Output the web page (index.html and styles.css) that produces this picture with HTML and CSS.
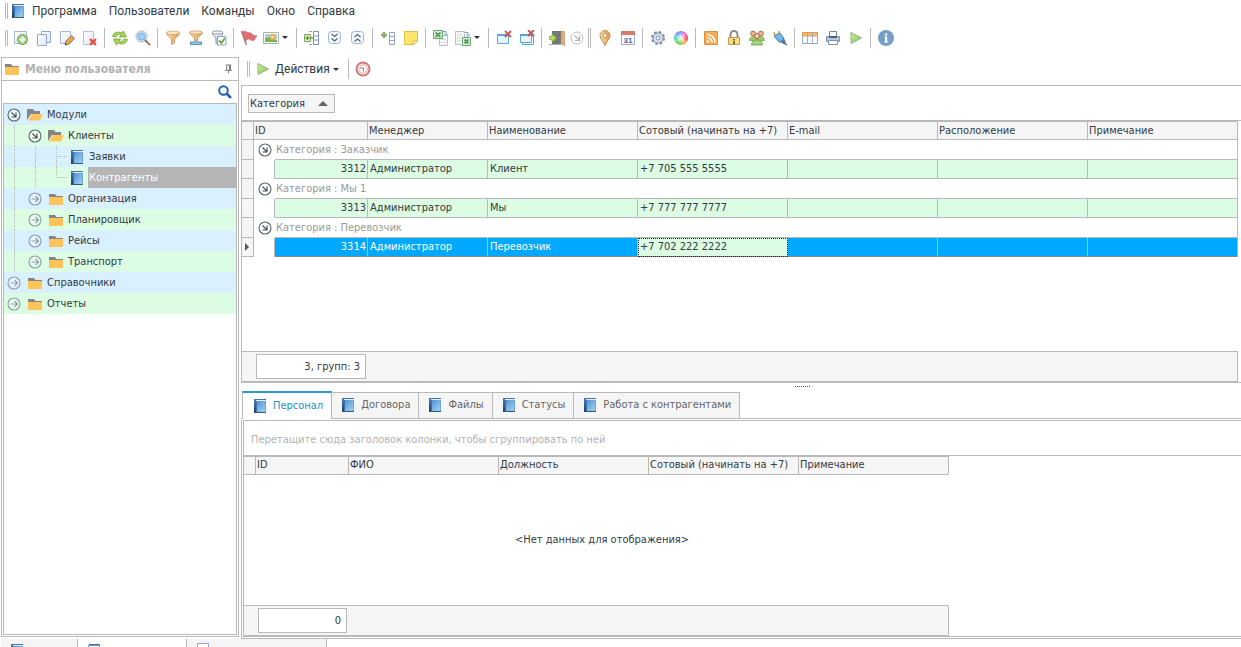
FILE: index.html
```html
<!DOCTYPE html>
<html lang="ru">
<head>
<meta charset="utf-8">
<title>Контрагенты</title>
<link rel="stylesheet" href="styles.css">
</head>
<body>
<svg class="sprite" aria-hidden="true">
  <defs>
    <linearGradient id="g-book" x1="0" y1="0" x2="1" y2="1"><stop offset="0" stop-color="#4f90d0"/><stop offset="1" stop-color="#a2d4f5"/></linearGradient>
    <linearGradient id="g-spine" x1="0" y1="0" x2="0" y2="1"><stop offset="0" stop-color="#4b7fba"/><stop offset="1" stop-color="#223a5c"/></linearGradient>
    <linearGradient id="g-gold" x1="0" y1="0" x2="1" y2="0"><stop offset="0" stop-color="#fbe0ad"/><stop offset="1" stop-color="#e39a4c"/></linearGradient>
    <linearGradient id="g-green" x1="0" y1="0" x2="1" y2="1"><stop offset="0" stop-color="#d3efb0"/><stop offset="1" stop-color="#7dbf4f"/></linearGradient>
    <linearGradient id="g-page" x1="0" y1="0" x2="1" y2="1"><stop offset="0" stop-color="#ffffff"/><stop offset="1" stop-color="#dfe7f5"/></linearGradient>
    <radialGradient id="g-shine"><stop offset="0" stop-color="#fff"/><stop offset="1" stop-color="#fff" stop-opacity="0"/></radialGradient>
  </defs>
  <symbol id="book" viewBox="0 0 16 16"><path d="M2 1h12v1H2z" fill="#4674a8"/><path d="M4 2h10v1H4z" fill="#e3eef8"/><path d="M4 3h10v11H4z" fill="url(#g-book)"/><path d="M13 3h1v11h-1z" fill="#6fa3d3"/><path d="M2 1h2v14H2z" fill="url(#g-spine)"/><path d="M4 3h1v11H4z" fill="#3871b0"/><path d="M3 14h11v1H3z" fill="#34597f"/></symbol>
  <symbol id="folder" viewBox="0 0 16 16"><path d="M1 3h6l1.500 2H15v2H1z" fill="#858585"/><path d="M1 6h14v8H1z" fill="#ffc35c"/></symbol>
  <symbol id="folder-open" viewBox="0 0 16 16"><path d="M0 2h6l1.500 2H13v3H4L0 13z" fill="#858585"/><path d="M5 7h11l-3 6.500H1z" fill="#ffc35c"/></symbol>
  <symbol id="opened" viewBox="0 0 14 14"><circle cx="7" cy="7" r="6" fill="#fff" fill-opacity=".5" stroke="#5b656e" stroke-width="1.100"/><path d="M4.500 4.500l4 4M9 4.500V9H4.500" fill="none" stroke="#4a535b" stroke-width="1.200"/></symbol>
  <symbol id="closed" viewBox="0 0 14 14"><circle cx="7" cy="7" r="6" fill="#fff" fill-opacity=".3" stroke="#8f9da5" stroke-width="1.100"/><path d="M3.500 7h6.500M7.500 4l3 3-3 3" fill="none" stroke="#8f9da5" stroke-width="1.100"/></symbol>
  <symbol id="add" viewBox="0 0 16 16"><path d="M1.500 1.500h12v12h-12z" fill="url(#g-page)" stroke="#a9b7db"/><circle cx="9.500" cy="9.500" r="5" fill="#9ccf7d" stroke="#6fa651"/><path d="M9.500 6.500v6M6.500 9.500h6" stroke="#fff" stroke-width="2"/></symbol>
  <symbol id="copy" viewBox="0 0 16 16"><path d="M5.500 1.500h9v11h-9z" fill="url(#g-page)" stroke="#94a7d2"/><path d="M1.500 4.500h9v11h-9z" fill="url(#g-page)" stroke="#94a7d2"/></symbol>
  <symbol id="edit" viewBox="0 0 16 16"><path d="M1.500 1.500h10v12h-10z" fill="url(#g-page)" stroke="#a9b7db"/><path d="M6 15l1-4 5.500-5.500 3 3L10 14z" fill="#e4a855" stroke="#9c7546"/><path d="M6 15l.5-2 1.500 1.500z" fill="#463c38"/></symbol>
  <symbol id="remove" viewBox="0 0 16 16"><path d="M1.500 1.500h10v13h-10z" fill="url(#g-page)" stroke="#b5c1df"/><path d="M8 9h6v6H8z" fill="#f2b5ad"/><path d="M8 9l6 6M14 9l-6 6" stroke="#d9534b" stroke-width="2"/></symbol>
  <symbol id="refresh" viewBox="0 0 16 16"><path d="M.5 6.500C1.500 2.500 6 1 10 3l1.500-2 3 6H7.500l1.500-2C6.500 4 4.500 5 4 7zM15.500 9.500C14.500 13.500 10 15 6 13l-1.500 2-3-6h7L7 11c2.500 1 4.500 0 5-2z" fill="#a6d455" stroke="#6ca33c" stroke-width=".8"/></symbol>
  <symbol id="find" viewBox="0 0 16 16"><circle cx="6.500" cy="6.500" r="5.500" fill="#eaf4fd" stroke="#a5b4c5"/><circle cx="6.500" cy="6.500" r="3.800" fill="#a3cdf0" stroke="#7ca9d5"/><path d="M10.500 10.500l4 4" stroke="#b98258" stroke-width="2.200" stroke-linecap="round"/><path d="M10.500 10.500l1.500 1.500" stroke="#657fae" stroke-width="2"/></symbol>
  <symbol id="funnel" viewBox="0 0 16 16"><path d="M1.500 3c0 2.500 4.500 5 5 6v5.500L9.500 13V9c.5-1 5-3.500 5-6z" fill="url(#g-gold)" stroke="#c98e57" stroke-width=".8"/><ellipse cx="8" cy="2.800" rx="6.500" ry="1.800" fill="#fbe6bd" stroke="#d09a63" stroke-width=".8"/></symbol>
  <symbol id="funnel-edit" viewBox="0 0 16 16"><path d="M1.500 2.500c0 2 4.500 4.500 5 5.500v3h3V8c.5-1 5-3.500 5-5.500z" fill="url(#g-gold)" stroke="#c98e57" stroke-width=".8"/><ellipse cx="8" cy="2.500" rx="6.500" ry="1.600" fill="#fbe6bd" stroke="#d09a63" stroke-width=".8"/><path d="M2.500 12h11v2.500h-11z" fill="#8fd0e9" stroke="#538fba"/></symbol>
  <symbol id="funnel-check" viewBox="0 0 16 16"><path d="M1 3c0 2 4 4 4 5v5.500l3-1V8c1-1 4-3 4-5z" fill="#e3e9f2" stroke="#8796ae"/><ellipse cx="6.500" cy="2.500" rx="5.500" ry="1.600" fill="#fff" stroke="#8796ae"/><path d="M6.500 6.500h8.500v8.500H6.500z" fill="#fff" stroke="#8ba2cc"/><path d="M8 10.500l2.500 2.500L14 8" fill="none" stroke="#64ac43" stroke-width="1.800"/></symbol>
  <symbol id="flag" viewBox="0 0 16 16"><path d="M.5 1l5 14" stroke="#9a8b8b" stroke-width="1.500"/><path d="M1 2c2-2 4 0 6 .500s3 0 4 1.500 2.500 1.500 5 2c-2 1-1.500 4-4 4.500-2 .5-2-1.500-4-1.500s-2.500 1-4 2.500z" fill="#df6f74" stroke="#b9555a" stroke-width=".6"/></symbol>
  <symbol id="image" viewBox="0 0 16 16"><path d="M.5 2.500h15v11H.5z" fill="#fff" stroke="#a9b5a0"/><path d="M2 4h12v5H2z" fill="#a3d3eb"/><path d="M2 8l4-1 8 3v2H2z" fill="#75b458"/><circle cx="9.500" cy="7" r="3" fill="#f0a957"/><circle cx="9.500" cy="7" r="1.300" fill="#fff0b6"/></symbol>
  <symbol id="expand-col" viewBox="0 0 16 16"><path d="M9.500 1.500h5v13h-5zM9.500 6h5M9.500 10h5" fill="#fff" stroke="#7c92bb"/><path d="M5 1.500h3M5 14.500h3" stroke="#9aa8ae"/><path d="M.5 4.500h6v7h-6z" fill="#dff0cd" stroke="#79a65a"/><path d="M3.500 6v4M1.500 8h4M6 8h3" stroke="#5f9641" stroke-width="1.400"/></symbol>
  <symbol id="down2" viewBox="0 0 16 16"><rect x="1.500" y="1.500" width="12" height="12" rx="3" fill="#f6fafe" stroke="#9bb6d6"/><path d="M4.500 4l3 2.500 3-2.500M4.500 8.500l3 2.500 3-2.500" fill="none" stroke="#536783" stroke-width="1.300"/></symbol>
  <symbol id="up2" viewBox="0 0 16 16"><rect x="1.500" y="1.500" width="12" height="12" rx="3" fill="#f6fafe" stroke="#9bb6d6"/><path d="M4.500 7l3-2.500 3 2.500M4.500 11.500l3-2.500 3 2.500" fill="none" stroke="#536783" stroke-width="1.300"/></symbol>
  <symbol id="add-row" viewBox="0 0 16 16"><path d="M9.500 2.500h5v12h-5zM9.500 6.500h5M9.500 10.500h5" fill="#fff" stroke="#8da0c5"/><path d="M4 2v6M1 5h6" stroke="#87af68" stroke-width="2.500"/></symbol>
  <symbol id="note" viewBox="0 0 16 16"><path d="M1.500 1.500h13v9l-4 4h-9z" fill="#fce66b" stroke="#ddc044"/><path d="M10 15v-4h5z" fill="#fff4a5" stroke="#c6a037" stroke-width=".6"/></symbol>
  <symbol id="xls-out" viewBox="0 0 16 16"><path d="M6.500 5.500h8v10h-8z" fill="#f4f4f4" stroke="#bcbfc4"/><path d="M8 9.500h5M8 12.500h5" stroke="#d5d7da"/><path d="M.5.5h9v8h-9z" fill="#dcefd8" stroke="#6aa871"/><path d="M2.500 2.500l5 4.500M7.500 2.500l-5 4.500" stroke="#559c5d" stroke-width="1.800"/><path d="M10 1.500h3v3.500M11 3.500l2 2 2-2" fill="none" stroke="#6ca5c9"/></symbol>
  <symbol id="xls-in" viewBox="0 0 16 16"><path d="M.5 1.500h9v13h-9z" fill="#f4f4f4" stroke="#bcbfc4"/><path d="M2 5h5M2 8h4M2 11h4" stroke="#d5d7da"/><path d="M7.500 7.500h8v8h-8z" fill="#dcefd8" stroke="#6aa871"/><path d="M9.500 9.500l4 4M13.500 9.500l-4 4" stroke="#559c5d" stroke-width="1.800"/><path d="M10 2.500h3v3.500M11 4.500l2 2 2-2" fill="none" stroke="#6ca5c9"/></symbol>
  <symbol id="close-win" viewBox="0 0 16 16"><path d="M1.500 4.500h11v9h-11z" fill="#e6f4fd" stroke="#5da2d9"/><path d="M1 5h12" stroke="#5da2d9" stroke-width="2"/><path d="M9 1l6 6M15 1L9 7" stroke="#c4564c" stroke-width="1.800"/></symbol>
  <symbol id="close-all" viewBox="0 0 16 16"><path d="M3.500 6.500h11v8h-11z" fill="#fff" stroke="#5da2d9"/><path d="M1.500 4.500h11v8h-11z" fill="#e6f4fd" stroke="#5da2d9"/><path d="M1 5h12" stroke="#5da2d9" stroke-width="2"/><path d="M9 0l6 6M15 0L9 6" stroke="#c4564c" stroke-width="1.800"/></symbol>
  <symbol id="window" viewBox="0 0 16 16"><path d="M2.500 2.500h11v11h-11z" fill="#fff" stroke="#5d93c9"/><path d="M3 1.500h11" stroke="#4674a8"/></symbol>
  <symbol id="sheet" viewBox="0 0 16 16"><path d="M2.500.5h11v14h-11z" fill="#fff" stroke="#94a7d2"/></symbol>
  <symbol id="exit" viewBox="0 0 16 16"><path d="M3 1h10v13H3z" fill="#77777a"/><path d="M12 2.500L15.500 1v14.500L12 14z" fill="#dcae78" stroke="#b98e61" stroke-width=".6"/><path d="M0 14.500h12" stroke="#a9a9a9"/><path d="M0 6.500h3V4l4.500 4L3 12V9.500H0z" fill="#b5e34f" stroke="#73a433" stroke-width=".7"/></symbol>
  <symbol id="dim" viewBox="0 0 16 16"><circle cx="8" cy="8" r="6" fill="none" stroke="#bcbcbc"/><path d="M5.500 5.500l4.500 4.500M10.500 6v4.500H6" fill="none" stroke="#b3b3b3" stroke-width="1.200"/></symbol>
  <symbol id="pin" viewBox="0 0 16 16"><path d="M8 15.500C7 12 3 9 3 5.500a5 5 0 0 1 10 0C13 9 9 12 8 15.500z" fill="url(#g-gold)" stroke="#c19151"/><circle cx="8" cy="5.500" r="2" fill="#fff" stroke="#b98b52"/></symbol>
  <symbol id="gear" viewBox="0 0 16 16"><circle cx="8" cy="8" r="6" fill="none" stroke="#7d8dab" stroke-width="2" stroke-dasharray="2.700 2"/><circle cx="8" cy="8" r="5" fill="#dbe3f0" stroke="#8292b0"/><circle cx="8" cy="8" r="2" fill="#fff" stroke="#7d8dab"/></symbol>
  <symbol id="wheel" viewBox="0 0 16 16"><path d="M8 8V1a7 7 0 0 1 6 3.500z" fill="#e070d4"/><path d="M8 8l6-3.500a7 7 0 0 1 0 7z" fill="#f0506f"/><path d="M8 8l6 3.500A7 7 0 0 1 8 15z" fill="#f3a94a"/><path d="M8 8v7a7 7 0 0 1-6-3.500z" fill="#6fd650"/><path d="M8 8l-6 3.500a7 7 0 0 1 0-7z" fill="#4bd6c0"/><path d="M8 8L2 4.500A7 7 0 0 1 8 1z" fill="#7199ef"/><circle cx="8" cy="8" r="6" fill="url(#g-shine)"/></symbol>
  <symbol id="rss" viewBox="0 0 16 16"><path d="M1.500 1.500h13v13h-13z" fill="#f5ac56" stroke="#dc9144"/><circle cx="5" cy="11.500" r="1.200" fill="#fff"/><path d="M4 7.500a5 5 0 0 1 5 5M4 4.500a8 8 0 0 1 8 8" fill="none" stroke="#fff" stroke-width="1.500"/></symbol>
  <symbol id="lock" viewBox="0 0 16 16"><path d="M4.500 8V4.500a3.500 3.500 0 0 1 7 0V8" fill="none" stroke="#8a8d92" stroke-width="2"/><path d="M2.500 7.500h11v7h-11z" fill="#fbdc86" stroke="#c29b4c"/><path d="M8 9v1.500M8 11.500V14" stroke="#77623a" stroke-width="2"/></symbol>
  <symbol id="users" viewBox="0 0 16 16"><path d="M.5 10.500c0-5 7-5 7 0zM8.500 10.500c0-5 7-5 7 0z" fill="#9ccb6e" stroke="#699b4b" stroke-width=".7"/><circle cx="4" cy="3.500" r="2.400" fill="#edb895" stroke="#a8734f"/><circle cx="12" cy="3.500" r="2.400" fill="#edb895" stroke="#a8734f"/><circle cx="8" cy="6" r="2.600" fill="#f3c5a2" stroke="#a8734f"/><path d="M2.500 15c0-7 11-7 11 0z" fill="#a5d47b" stroke="#699b4b" stroke-width=".8"/></symbol>
  <symbol id="plug" viewBox="0 0 16 16"><path d="M3 5L2 2M7 4V1" stroke="#c7a44d" stroke-width="1.600"/><path d="M2 6l6-3 4 5.500-4.500 4z" fill="#73b8e6" stroke="#447fae"/><path d="M8 12l4-3.500 2 4-2.500 1.500z" fill="#517b9e"/><path d="M12 13l3 2" stroke="#56616d" stroke-width="1.500"/></symbol>
  <symbol id="grid" viewBox="0 0 16 16"><path d="M.5 2.500h15v11H.5z" fill="#fff" stroke="#8da3c9"/><path d="M0 2h16v4H0z" fill="#f3ba6d"/><path d="M5.500 2v12M10.500 2v12" stroke="#9aafd1"/><path d="M.5 2.500h15V6H.5z" fill="none" stroke="#cb9858" stroke-width=".8"/></symbol>
  <symbol id="printer" viewBox="0 0 16 16"><path d="M4.500 1.500h7V8h-7z" fill="#f8faff" stroke="#7183ab"/><path d="M1.500 6.500h13v5h-13z" fill="#b9c7e1" stroke="#7b8fb7"/><path d="M4 6h8v2H4z" fill="#4f5e7f"/><path d="M3.500 10.500h9v4h-9z" fill="#fff" stroke="#7b8fb7"/></symbol>
  <symbol id="play" viewBox="0 0 16 16"><path d="M3 2.500L13.500 8 3 13.500z" fill="url(#g-green)" stroke="#8db673"/></symbol>
  <symbol id="info" viewBox="0 0 16 16"><circle cx="8" cy="8" r="8" fill="#739fc8"/><path d="M7 3.500h2.200v2H7zM6.500 6.500h2.700v5h1v1H6v-1h1v-4h-.5z" fill="#fff"/></symbol>
  <symbol id="clock" viewBox="0 0 16 16"><circle cx="8" cy="8" r="6.500" fill="#fff" stroke="#d47474" stroke-width="2"/><circle cx="8" cy="8" r="4.200" fill="#fff" stroke="#dda0a0"/><path d="M5 7h3.500v3.500" fill="none" stroke="#8f8383" stroke-width="1.200"/></symbol>
  <symbol id="tack" viewBox="0 0 10 10"><path d="M2 .5h6M3 1v5M7 1v5M1 6.500h8M5 7v3" stroke="#6d6d6d" fill="none"/><path d="M5.500 1h2v5h-2z" fill="#777"/></symbol>
  <symbol id="search" viewBox="0 0 16 16"><circle cx="6.500" cy="6.500" r="4.300" fill="none" stroke="#2363b5" stroke-width="2"/><path d="M9.500 9.500L14 14" stroke="#2363b5" stroke-width="2.500"/></symbol>
</svg>

<div class="app">
  <nav class="menubar">
    <span class="grip"></span>
    <svg class="icon menubar-logo"><use href="#book"/></svg>
    <button>Программа</button><button>Пользователи</button><button>Команды</button><button>Окно</button><button>Справка</button>
  </nav>

  <div class="toolbar" role="toolbar">
    <span class="grip"></span>
    <button class="tool" aria-label="Добавить"><svg class="icon"><use href="#add"/></svg></button>
    <button class="tool" aria-label="Копировать"><svg class="icon"><use href="#copy"/></svg></button>
    <button class="tool" aria-label="Изменить"><svg class="icon"><use href="#edit"/></svg></button>
    <button class="tool" aria-label="Удалить"><svg class="icon"><use href="#remove"/></svg></button>
    <span class="sep"></span>
    <button class="tool" aria-label="Обновить"><svg class="icon"><use href="#refresh"/></svg></button>
    <button class="tool" aria-label="Найти"><svg class="icon"><use href="#find"/></svg></button>
    <span class="sep"></span>
    <button class="tool" aria-label="Фильтр"><svg class="icon"><use href="#funnel"/></svg></button>
    <button class="tool" aria-label="Настроить фильтр"><svg class="icon"><use href="#funnel-edit"/></svg></button>
    <button class="tool" aria-label="Применить фильтр"><svg class="icon"><use href="#funnel-check"/></svg></button>
    <span class="sep"></span>
    <button class="tool" aria-label="Флаг"><svg class="icon"><use href="#flag"/></svg></button>
    <button class="tool drop" aria-label="Изображение"><svg class="icon"><use href="#image"/></svg></button>
    <span class="sep"></span>
    <button class="tool" aria-label="Колонки"><svg class="icon"><use href="#expand-col"/></svg></button>
    <button class="tool" aria-label="Развернуть"><svg class="icon"><use href="#down2"/></svg></button>
    <button class="tool" aria-label="Свернуть"><svg class="icon"><use href="#up2"/></svg></button>
    <span class="sep"></span>
    <button class="tool" aria-label="Добавить строку"><svg class="icon"><use href="#add-row"/></svg></button>
    <button class="tool" aria-label="Заметка"><svg class="icon"><use href="#note"/></svg></button>
    <span class="sep"></span>
    <button class="tool" aria-label="Экспорт"><svg class="icon"><use href="#xls-out"/></svg></button>
    <button class="tool drop" aria-label="Импорт"><svg class="icon"><use href="#xls-in"/></svg></button>
    <span class="sep"></span>
    <button class="tool" aria-label="Закрыть окно"><svg class="icon"><use href="#close-win"/></svg></button>
    <button class="tool" aria-label="Закрыть все окна"><svg class="icon"><use href="#close-all"/></svg></button>
    <span class="sep"></span>
    <button class="tool" aria-label="Выход"><svg class="icon"><use href="#exit"/></svg></button>
    <button class="tool slim" aria-label="Показать"><svg class="icon"><use href="#dim"/></svg></button>
    <span class="sep double"></span>
    <button class="tool" aria-label="Карта"><svg class="icon"><use href="#pin"/></svg></button>
    <button class="tool" aria-label="Календарь"><svg class="icon" viewBox="0 0 16 16"><path d="M1.500 1.500h13v13h-13z" fill="#f8fbff" stroke="#9aabcd"/><path d="M1 1h14v4H1z" fill="#d9796a"/><text x="8" y="13" text-anchor="middle" class="calendar-day">31</text></svg></button>
    <span class="sep"></span>
    <button class="tool" aria-label="Настройки"><svg class="icon"><use href="#gear"/></svg></button>
    <button class="tool" aria-label="Цвета"><svg class="icon"><use href="#wheel"/></svg></button>
    <span class="sep"></span>
    <button class="tool" aria-label="Лента"><svg class="icon"><use href="#rss"/></svg></button>
    <button class="tool" aria-label="Блокировка"><svg class="icon"><use href="#lock"/></svg></button>
    <button class="tool" aria-label="Группы"><svg class="icon"><use href="#users"/></svg></button>
    <button class="tool" aria-label="Подключение"><svg class="icon"><use href="#plug"/></svg></button>
    <span class="sep"></span>
    <button class="tool" aria-label="Таблица"><svg class="icon"><use href="#grid"/></svg></button>
    <button class="tool" aria-label="Печать"><svg class="icon"><use href="#printer"/></svg></button>
    <button class="tool" aria-label="Запуск"><svg class="icon"><use href="#play"/></svg></button>
    <span class="sep"></span>
    <button class="tool" aria-label="О программе"><svg class="icon"><use href="#info"/></svg></button>
  </div>

  <div class="workspace">
    <aside class="sidebar">
      <header class="sidebar-head">
        <svg class="icon"><use href="#folder"/></svg>
        <h2>Меню пользователя</h2>
        <button class="tack" aria-label="Закрепить"><svg><use href="#tack"/></svg></button>
      </header>
      <div class="sidebar-search">
        <input type="text" aria-label="Поиск по меню">
        <button class="tool" aria-label="Искать"><svg class="icon"><use href="#search"/></svg></button>
      </div>
      <ul class="tree">
        <li><span class="cell"><svg class="node"><use href="#opened"/></svg></span><span class="cell"><svg class="icon"><use href="#folder-open"/></svg></span><button>Модули</button></li>
        <li><span class="cell guide"></span><span class="cell"><svg class="node"><use href="#opened"/></svg></span><span class="cell"><svg class="icon"><use href="#folder-open"/></svg></span><button>Клиенты</button></li>
        <li><span class="cell guide"></span><span class="cell guide"></span><span class="cell guide branch"></span><span class="cell"><svg class="icon"><use href="#book"/></svg></span><button>Заявки</button></li>
        <li><span class="cell guide"></span><span class="cell guide"></span><span class="cell guide branch last"></span><span class="cell"><svg class="icon"><use href="#book"/></svg></span><button class="selected">Контрагенты</button></li>
        <li><span class="cell guide"></span><span class="cell"><svg class="node"><use href="#closed"/></svg></span><span class="cell"><svg class="icon"><use href="#folder"/></svg></span><button>Организация</button></li>
        <li><span class="cell guide"></span><span class="cell"><svg class="node"><use href="#closed"/></svg></span><span class="cell"><svg class="icon"><use href="#folder"/></svg></span><button>Планировщик</button></li>
        <li><span class="cell guide"></span><span class="cell"><svg class="node"><use href="#closed"/></svg></span><span class="cell"><svg class="icon"><use href="#folder"/></svg></span><button>Рейсы</button></li>
        <li><span class="cell guide"></span><span class="cell"><svg class="node"><use href="#closed"/></svg></span><span class="cell"><svg class="icon"><use href="#folder"/></svg></span><button>Транспорт</button></li>
        <li><span class="cell"><svg class="node"><use href="#closed"/></svg></span><span class="cell"><svg class="icon"><use href="#folder"/></svg></span><button>Справочники</button></li>
        <li><span class="cell"><svg class="node"><use href="#closed"/></svg></span><span class="cell"><svg class="icon"><use href="#folder"/></svg></span><button>Отчеты</button></li>
      </ul>
    </aside>

    <main class="main">
      <div class="actions">
        <span class="grip"></span>
        <button class="action drop"><svg class="icon"><use href="#play"/></svg>Действия</button>
        <span class="sep"></span>
        <button class="tool" aria-label="История"><svg class="icon"><use href="#clock"/></svg></button>
      </div>

      <section class="master">
        <div class="group-area"><button class="group-chip">Категория</button></div>
        <div class="grid-body">
          <table class="grid">
            <colgroup><col class="c-mark"><col class="c-indent"><col class="c-id"><col class="c-manager"><col class="c-wide"><col class="c-wide"><col class="c-wide"><col class="c-wide"><col></colgroup>
            <thead><tr><th></th><th colspan="2">ID</th><th>Менеджер</th><th>Наименование</th><th>Сотовый (начинать на +7)</th><th>E-mail</th><th>Расположение</th><th>Примечание</th></tr></thead>
            <tbody>
              <tr class="group"><td class="mark"></td><td class="indent"><svg class="node"><use href="#opened"/></svg></td><td colspan="7">Категория : Заказчик</td></tr>
              <tr class="data"><td class="mark"></td><td class="indent"></td><td class="num">3312</td><td>Администратор</td><td>Клиент</td><td>+7 705 555 5555</td><td></td><td></td><td></td></tr>
              <tr class="group"><td class="mark"></td><td class="indent"><svg class="node"><use href="#opened"/></svg></td><td colspan="7">Категория : Мы 1</td></tr>
              <tr class="data"><td class="mark"></td><td class="indent"></td><td class="num">3313</td><td>Администратор</td><td>Мы</td><td>+7 777 777 7777</td><td></td><td></td><td></td></tr>
              <tr class="group"><td class="mark"></td><td class="indent"><svg class="node"><use href="#opened"/></svg></td><td colspan="7">Категория : Перевозчик</td></tr>
              <tr class="data active"><td class="mark"><span class="current"></span></td><td class="indent"></td><td class="num">3314</td><td>Администратор</td><td>Перевозчик</td><td class="focused">+7 702 222 2222</td><td></td><td></td><td></td></tr>
            </tbody>
          </table>
        </div>
        <footer class="summary"><output class="summary-box">3, групп: 3</output></footer>
      </section>

      <div class="splitter"><span></span></div>

      <section class="detail">
        <div class="tabs" role="tablist">
          <button class="tab on" role="tab"><svg class="icon"><use href="#book"/></svg>Персонал</button>
          <button class="tab" role="tab"><svg class="icon"><use href="#book"/></svg>Договора</button>
          <button class="tab" role="tab"><svg class="icon"><use href="#book"/></svg>Файлы</button>
          <button class="tab" role="tab"><svg class="icon"><use href="#book"/></svg>Статусы</button>
          <button class="tab" role="tab"><svg class="icon"><use href="#book"/></svg>Работа с контрагентами</button>
        </div>
        <div class="detail-pane">
          <p class="group-hint">Перетащите сюда заголовок колонки, чтобы сгруппировать по ней</p>
          <div class="detail-grid">
            <table class="grid">
              <colgroup><col class="c-mark"><col class="c-id"><col class="c-wide"><col class="c-wide"><col class="c-wide"><col></colgroup>
              <thead><tr><th></th><th>ID</th><th>ФИО</th><th>Должность</th><th>Сотовый (начинать на +7)</th><th>Примечание</th></tr></thead>
            </table>
            <p class="empty">&lt;Нет данных для отображения&gt;</p>
            <footer class="summary"><output class="summary-box small">0</output></footer>
          </div>
        </div>
      </section>
    </main>
  </div>

  <div class="window-tabs">
    <button class="window-tab" aria-label="Окно 1"><svg class="icon"><use href="#book"/></svg></button>
    <button class="window-tab current-tab" aria-label="Окно 2"><svg class="icon"><use href="#window"/></svg></button>
    <button class="window-tab wide" aria-label="Окно 3"><svg class="icon"><use href="#sheet"/></svg></button>
  </div>
</div>
</body>
</html>
```

FILE: styles.css
```css
:root {
  --line: #b9b9b9;
  --head: #f5f5f5;
  --blue-row: #d9f0ff;
  --green-row: #dcfce3;
  --active: #00a8ff;
  --text: #333b42;
}

* { box-sizing: border-box; }

body {
  margin: 0;
  background: #fff;
  color: var(--text);
  font: 11px/14px "DejaVu Sans Condensed", "DejaVu Sans", sans-serif;
}

h2, p, ul { margin: 0; padding: 0; }

button {
  margin: 0;
  padding: 0;
  border: 0;
  background: none;
  color: inherit;
  font: inherit;
  white-space: nowrap;
}

svg { display: block; flex: none; }
.sprite { position: absolute; width: 0; height: 0; }
.icon { width: 16px; height: 16px; }
.node { width: 14px; height: 14px; }
.calendar-day { font: bold 8px "Liberation Sans", sans-serif; fill: #566684; }

.app {
  display: flex;
  flex-direction: column;
  height: 100vh;
  overflow: hidden;
}

/* Menu and toolbars */
.menubar {
  display: flex;
  align-items: center;
  flex: none;
  height: 22px;
  padding-left: 5px;
  font: 12px/16px Roboto, "Noto Sans", sans-serif;
}
.menubar-logo { margin: 0 6px 0 2px; }
.menubar button { margin-right: 12px; }

.grip {
  flex: none;
  width: 3px;
  height: 16px;
  border: solid var(--line);
  border-width: 0 1px;
}

.toolbar {
  display: flex;
  align-items: center;
  flex: none;
  height: 33px;
  padding: 0 0 2px 5px;
}
.toolbar .grip { margin-right: 1px; }

.tool {
  display: flex;
  align-items: center;
  justify-content: center;
  flex: none;
  width: 23px;
  height: 22px;
}
.tool.slim { width: 18px; }
.tool.drop { width: 33px; justify-content: flex-start; padding-left: 3px; }
.drop::after {
  content: "";
  margin-left: 3px;
  border: 3px solid transparent;
  border-top-color: #333;
  border-bottom: 0;
}

.sep {
  flex: none;
  width: 1px;
  height: 20px;
  margin: 0 3px;
  background: var(--line);
}
.sep.double {
  width: 3px;
  margin: 0 2px;
  border: solid var(--line);
  border-width: 0 1px;
  background: none;
}

.workspace {
  display: flex;
  flex: 1;
  min-height: 0;
}

/* Side menu */
.sidebar {
  display: flex;
  flex-direction: column;
  flex: none;
  width: 238px;
  margin: 2px 2px 2px 1px;
  border: 1px solid var(--line);
}
.sidebar-head {
  display: flex;
  align-items: center;
  gap: 5px;
  height: 23px;
  padding: 0 5px 0 2px;
  border-bottom: 1px solid var(--line);
}
.sidebar-head h2 {
  flex: 1;
  color: #b2b2b2;
  font: bold 12px/16px "DejaVu Sans Condensed", sans-serif;
}
.tack svg { width: 9px; height: 10px; }
.sidebar-search {
  display: flex;
  align-items: center;
  height: 22px;
  padding-right: 2px;
}
.sidebar-search input {
  flex: 1;
  min-width: 0;
  border: 0;
  outline: 0;
  font: inherit;
}

.tree {
  flex: 1;
  margin: 0 1px 1px;
  border: 1px solid var(--line);
  list-style: none;
}
.tree li {
  display: flex;
  height: 21px;
  background: var(--blue-row);
}
.tree li:nth-child(even) { background: var(--green-row); }
.tree button {
  flex: 1;
  padding-left: 1px;
  text-align: left;
}
.tree .selected { background: #b5b5b5; color: #fff; }
.cell {
  display: flex;
  align-items: center;
  justify-content: center;
  flex: none;
  width: 21px;
  padding-right: 1px;
}
.guide {
  background: repeating-linear-gradient(#aebbb5 0 1px, transparent 1px 2px) 10px 0 / 1px 100% no-repeat;
}
.guide.branch {
  background:
    repeating-linear-gradient(#aebbb5 0 1px, transparent 1px 2px) 10px 0 / 1px 100% no-repeat,
    repeating-linear-gradient(90deg, #aebbb5 0 1px, transparent 1px 2px) 10px 10px / 11px 1px no-repeat;
}
.guide.last { background-size: 1px 10px, 11px 1px; }

/* Main area */
.main {
  display: flex;
  flex-direction: column;
  flex: 1;
  min-width: 0;
}
.actions {
  display: flex;
  align-items: center;
  flex: none;
  height: 30px;
  padding: 0 0 2px 6px;
  font: 12px/16px Roboto, "Noto Sans", sans-serif;
}
.action {
  display: flex;
  align-items: center;
  margin: 0 6px 0 5px;
}
.action .icon { margin-right: 4px; }

.master {
  display: flex;
  flex-direction: column;
  flex: 297;
  min-height: 0;
  border: solid var(--line);
  border-width: 1px 0 1px 1px;
}
.group-area {
  height: 35px;
  padding: 8px 6px;
  border-bottom: 1px solid var(--line);
}
.group-chip {
  display: flex;
  align-items: center;
  justify-content: space-between;
  width: 87px;
  height: 19px;
  padding: 0 6px 0 1px;
  border: 1px solid var(--line);
  background: var(--head);
}
.group-chip::after {
  content: "";
  border: 5px solid transparent;
  border-top: 0;
  border-bottom-color: #666;
}

.grid-body { flex: 1; min-height: 0; margin-right: 3px; }
.grid {
  width: 100%;
  table-layout: fixed;
  border-spacing: 0;
  border-top: 1px solid var(--line);
}
.c-mark { width: 12px; }
.c-indent { width: 21px; }
.c-id { width: 93px; }
.c-manager { width: 120px; }
.c-wide { width: 150px; }

.grid th, .grid td {
  height: 19px;
  padding: 0 2px;
  border: solid var(--line);
  border-width: 0 1px 1px 0;
  overflow: hidden;
  font-weight: normal;
  text-align: left;
  white-space: nowrap;
}
.grid th { height: 18px; padding: 0 1px; background: var(--head); }
.grid .group td { height: 20px; padding: 0 1px; color: #999; }
.grid .mark, .grid .group .mark { padding: 0 3px; background: var(--head); }
.grid .group .indent { padding: 0 4px; border: 0; }
.data td { background: var(--green-row); }
.data .indent { border-bottom: 0; background: #fff; }
.grid .num { padding-right: 1px; text-align: right; }
.active td { border-bottom-color: #888; background: var(--active); color: #fff; }
.grid .active .mark { border-bottom-color: var(--line); }
.grid .active .focused {
  background: var(--green-row);
  color: var(--text);
  outline: 1px dotted #222;
  outline-offset: -1px;
}
.current {
  display: block;
  width: 4px;
  border: 4px solid transparent;
  border-left-color: #555;
  border-right: 0;
}

.summary {
  flex: none;
  height: 31px;
  margin-right: 3px;
  padding: 2px 14px;
  border: solid var(--line);
  border-width: 1px 1px 1px 0;
  background: var(--head);
}
.summary-box {
  display: block;
  width: 110px;
  height: 25px;
  padding: 5px;
  border: 1px solid var(--line);
  background: #fff;
  text-align: right;
}
.summary-box.small { width: 89px; }

.splitter {
  display: flex;
  justify-content: center;
  flex: none;
  height: 8px;
  padding: 3px 0 0 122px;
}
.splitter span { width: 15px; height: 1px; border-top: 1px dotted #555; }

.detail {
  display: flex;
  flex-direction: column;
  flex: 249;
  min-height: 0;
}
.tabs {
  display: flex;
  align-items: flex-end;
  flex: none;
  height: 28px;
  padding-left: 1px;
  border-bottom: 1px solid var(--line);
}
.tab {
  display: flex;
  align-items: center;
  gap: 5px;
  height: 26px;
  padding: 0 8px;
  border: solid var(--line);
  border-width: 1px 1px 0 0;
  background: var(--head);
  color: #666;
}
.tab.on {
  height: 28px;
  padding-left: 9px;
  margin-bottom: -1px;
  border-top: 2px solid #2b98d3;
  border-left: 1px solid var(--line);
  background: #fff;
  color: #1d8fd0;
}

.detail-pane {
  display: flex;
  flex-direction: column;
  flex: 1;
  min-height: 0;
  margin-top: 1px;
  padding-left: 1px;
  border-bottom: 1px solid var(--line);
  border-left: 1px solid var(--line);
}
.group-hint {
  flex: none;
  height: 36px;
  padding: 12px 7px;
  border: solid var(--line);
  border-width: 1px 0 1px 1px;
  color: #b2b2b2;
}
.detail-grid {
  display: flex;
  flex-direction: column;
  flex: 1;
  min-height: 0;
  border: solid var(--line);
  border-width: 0 0 1px 1px;
  margin-bottom: 1px;
}
.detail-grid .grid, .detail-grid .summary { width: 705px; max-width: 100%; }
.empty {
  display: flex;
  align-items: center;
  justify-content: center;
  flex: 1;
  width: 716px;
  max-width: 100%;
}

/* Open windows strip */
.window-tabs {
  display: flex;
  flex: none;
  height: 8px;
  padding-left: 1px;
  overflow: hidden;
}
.window-tab {
  width: 77px;
  height: 24px;
  padding: 4px 8px;
  border: solid var(--line);
  border-width: 0 1px 0 0;
  background: var(--head);
}
.window-tab.current-tab { width: 109px; background: #fff; }
.window-tab.wide { width: 140px; }
```
